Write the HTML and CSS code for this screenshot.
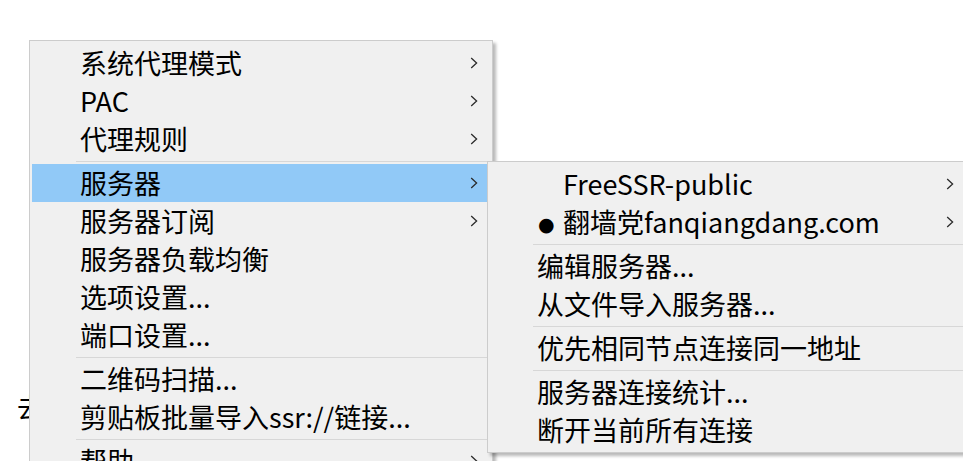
FILE: index.html
```html
<!DOCTYPE html>
<html lang="zh-CN">
<head>
<meta charset="utf-8">
<title>SSR 菜单</title>
<link rel="stylesheet" href="styles.css">
</head>
<body>
<div class="backdrop"><span class="bg-char">去</span></div>

<div class="menu main-menu">
  <div class="item"><span class="label">系统代理模式</span><svg class="chev" viewBox="0 0 8 12"><path d="M1.2 1 L6.6 6 L1.2 11"/></svg></div>
  <div class="item"><span class="label">PAC</span><svg class="chev" viewBox="0 0 8 12"><path d="M1.2 1 L6.6 6 L1.2 11"/></svg></div>
  <div class="item"><span class="label">代理规则</span><svg class="chev" viewBox="0 0 8 12"><path d="M1.2 1 L6.6 6 L1.2 11"/></svg></div>
  <div class="sep"></div>
  <div class="item active"><span class="label">服务器</span><svg class="chev" viewBox="0 0 8 12"><path d="M1.2 1 L6.6 6 L1.2 11"/></svg></div>
  <div class="item"><span class="label">服务器订阅</span><svg class="chev" viewBox="0 0 8 12"><path d="M1.2 1 L6.6 6 L1.2 11"/></svg></div>
  <div class="item"><span class="label">服务器负载均衡</span></div>
  <div class="item"><span class="label">选项设置...</span></div>
  <div class="item"><span class="label">端口设置...</span></div>
  <div class="sep"></div>
  <div class="item"><span class="label">二维码扫描...</span></div>
  <div class="item"><span class="label">剪贴板批量导入ssr://链接...</span></div>
  <div class="sep"></div>
  <div class="item"><span class="label">帮助</span><svg class="chev" viewBox="0 0 8 12"><path d="M1.2 1 L6.6 6 L1.2 11"/></svg></div>
</div>

<div class="menu sub-menu">
  <div class="item"><span class="label"><span class="mark"></span>FreeSSR-public</span><svg class="chev" viewBox="0 0 8 12"><path d="M1.2 1 L6.6 6 L1.2 11"/></svg></div>
  <div class="item"><span class="label"><span class="mark"><span class="dot">●</span></span>翻墙党fanqiangdang.com</span><svg class="chev" viewBox="0 0 8 12"><path d="M1.2 1 L6.6 6 L1.2 11"/></svg></div>
  <div class="sep"></div>
  <div class="item"><span class="label">编辑服务器...</span></div>
  <div class="item"><span class="label">从文件导入服务器...</span></div>
  <div class="sep"></div>
  <div class="item"><span class="label">优先相同节点连接同一地址</span></div>
  <div class="sep"></div>
  <div class="item"><span class="label">服务器连接统计...</span></div>
  <div class="item"><span class="label">断开当前所有连接</span></div>
</div>
</body>
</html>
```

FILE: styles.css
```css
html, body {
  margin: 0;
  padding: 0;
  width: 963px;
  height: 461px;
  overflow: hidden;
  background: #ffffff;
  font-family: "Noto Sans CJK SC", "Noto Sans", sans-serif;
  color: #000;
}

.backdrop {
  padding: 388px 0 0 17px;
}

.bg-char {
  font-size: 27px;
  line-height: 38px;
}

.menu {
  position: absolute;
  box-sizing: border-box;
  background: #f0f0f0;
  border: 1px solid #cccccc;
  padding: 3px 2px;
  box-shadow: 3px 3px 3px rgba(0, 0, 0, 0.28);
  font-size: 27px;
}

.main-menu {
  left: 29px;
  top: 40px;
  width: 464px;
  height: 480px;
}

.sub-menu {
  left: 487px;
  top: 161px;
  width: 482px;
}

.item {
  height: 38px;
  display: flex;
  align-items: center;
  justify-content: space-between;
  padding: 0 12px 0 47px;
  line-height: 38px;
  white-space: nowrap;
}

.main-menu .item {
  padding-left: 48px;
}

.item.active {
  background: #91c9f7;
}

.label {
  display: flex;
  align-items: center;
}

.mark {
  display: inline-block;
  width: 26px;
  flex: none;
}

.dot {
  font-family: "DejaVu Sans", sans-serif;
  font-size: 19px;
  margin-left: 1px;
}

.chev {
  width: 8px;
  height: 12px;
  flex: none;
}

.chev path {
  fill: none;
  stroke: #2b2b2b;
  stroke-width: 1.3;
}

.sep {
  height: 1px;
  background: #d7d7d7;
  margin: 3px 0 2px 44px;
}

.sub-menu .sep {
  margin-left: 43px;
}
```
